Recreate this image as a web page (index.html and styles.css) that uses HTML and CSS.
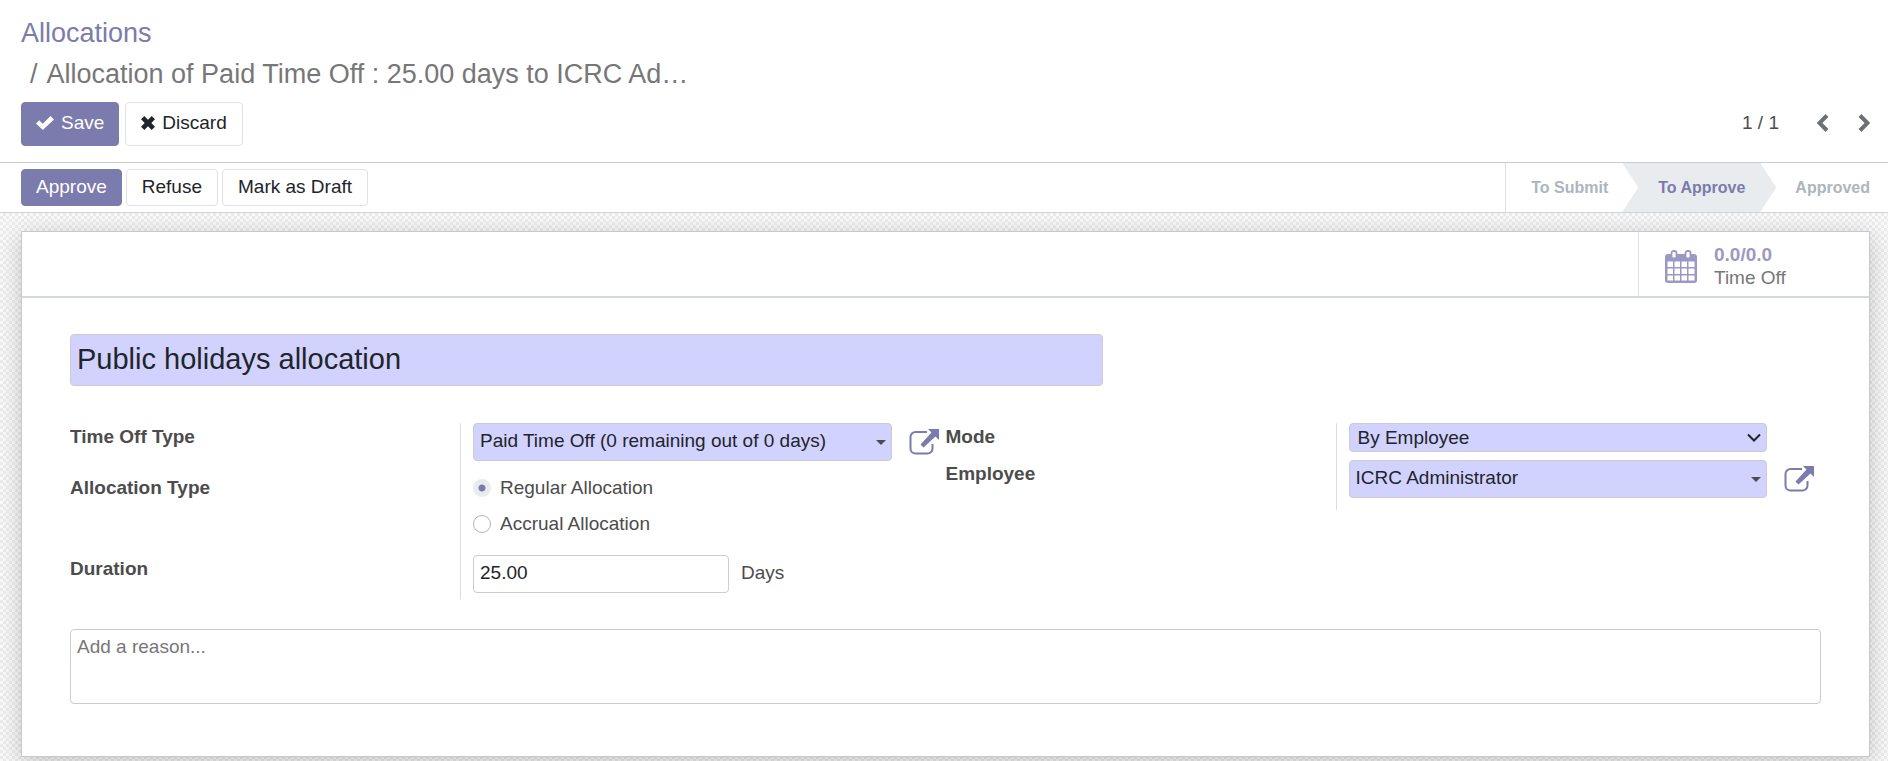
FILE: index.html
```html
<!DOCTYPE html>
<html lang="en">
<head>
<meta charset="utf-8">
<title>Allocation of Paid Time Off</title>
<link rel="stylesheet" href="styles.css">
</head>
<body>
<svg class="defs" aria-hidden="true">
  <symbol id="external" viewBox="0 0 30 26">
    <path d="M18 3H6.500a5 5 0 0 0-5 5V19.500a5 5 0 0 0 5 5H18.500a5 5 0 0 0 5-5V15" fill="none" stroke="currentColor" stroke-width="2"/>
    <path d="M19 0H30V11L26.500 7.500 14.500 18.500 11.500 15.500 22.500 3.500z" fill="currentColor"/>
  </symbol>
</svg>
<header class="control-panel">
  <nav class="breadcrumb" aria-label="Breadcrumb">
    <a class="crumb" href="#">Allocations</a>
    <span class="crumb crumb-active"><span class="slash">/</span>Allocation of Paid Time Off : 25.00 days to ICRC Ad…</span>
  </nav>
  <div class="actions">
    <div class="action-buttons">
      <button class="btn btn-primary btn-large" type="button"><svg class="check" viewBox="0 0 18 14"><path d="M0 7.500 3.200 4.300 6.800 7.700 14.500 0 18 3.400 6.800 14z" fill="currentColor"/></svg>Save</button>
      <button class="btn btn-large" type="button"><svg class="cross" viewBox="0 0 14 14"><path d="M3.300 0 7 3.700 10.700 0 14 3.300 10.300 7 14 10.700 10.700 14 7 10.300 3.300 14 0 10.700 3.700 7 0 3.300z" fill="currentColor"/></svg>Discard</button>
    </div>
    <div class="pager">
      <span>1 / 1</span>
      <button class="pager-btn" type="button" aria-label="Previous"><svg viewBox="0 0 12 18"><path d="M10 1.500 2.500 9 10 16.500" fill="none" stroke="currentColor" stroke-width="4"/></svg></button>
      <button class="pager-btn" type="button" aria-label="Next"><svg viewBox="0 0 12 18"><path d="M2 1.500 9.500 9 2 16.500" fill="none" stroke="currentColor" stroke-width="4"/></svg></button>
    </div>
  </div>
</header>
<div class="statusbar">
  <div class="status-buttons">
    <button class="btn btn-primary" type="button">Approve</button>
    <button class="btn" type="button">Refuse</button>
    <button class="btn" type="button">Mark as Draft</button>
  </div>
  <div class="stages">
    <span class="stage">To Submit</span>
    <span class="stage stage-current">To Approve</span>
    <span class="stage stage-last">Approved</span>
  </div>
</div>
<main class="canvas">
  <form class="sheet">
    <div class="button-box">
      <button class="stat" type="button">
        <svg class="calendar" viewBox="0 0 32 33">
          <path d="M3 4H29a3 3 0 0 1 3 3V30a3 3 0 0 1-3 3H3a3 3 0 0 1-3-3V7a3 3 0 0 1 3-3z" fill="#9b98c4"/>
          <path d="M2.500 11.500H8V17H2.500zM9.500 11.500H15V17H9.500zM16.500 11.500H22V17H16.500zM23.500 11.500H29.500V17H23.500zM2.500 18.500H8V24H2.500zM9.500 18.500H15V24H9.500zM16.500 18.500H22V24H16.500zM23.500 18.500H29.500V24H23.500zM2.500 25.500H8V30.500H2.500zM9.500 25.500H15V30.500H9.500zM16.500 25.500H22V30.500H16.500zM23.500 25.500H29.500V30.500H23.500z" fill="#fff"/>
          <rect x="6.500" y="1" width="5" height="7.500" rx="2" fill="#fff" stroke="#9b98c4" stroke-width="1.800"/>
          <rect x="20.500" y="1" width="5" height="7.500" rx="2" fill="#fff" stroke="#9b98c4" stroke-width="1.800"/>
        </svg>
        <span class="stat-text"><strong class="stat-value">0.0/0.0</strong><span>Time Off</span></span>
      </button>
    </div>
    <div class="sheet-body">
      <input class="field required title" type="text" value="Public holidays allocation" aria-label="Title">
      <div class="groups">
        <div class="group">
          <div class="row row-type">
            <label class="label" for="type">Time Off Type</label>
            <div class="value">
              <div class="combo"><input class="field required" id="type" type="text" value="Paid Time Off (0 remaining out of 0 days)"><span class="caret"></span></div>
              <a class="external" href="#" aria-label="Open time off type"><svg><use href="#external"/></svg></a>
            </div>
          </div>
          <div class="row row-alloc">
            <span class="label" id="alloc">Allocation Type</span>
            <div class="value radios" role="radiogroup" aria-labelledby="alloc">
              <label class="radio"><input type="radio" name="alloc" checked>Regular Allocation</label>
              <label class="radio"><input type="radio" name="alloc">Accrual Allocation</label>
            </div>
          </div>
          <div class="row row-duration">
            <label class="label" for="duration">Duration</label>
            <div class="value"><input class="field duration" id="duration" type="text" value="25.00"><span class="unit">Days</span></div>
          </div>
        </div>
        <div class="group">
          <div class="row row-mode">
            <label class="label" for="mode">Mode</label>
            <div class="value">
              <div class="combo">
                <select class="field required mode" id="mode"><option>By Employee</option></select>
                <svg class="chevron" viewBox="0 0 14 9"><path d="M1 1.500 7 7.500 13 1.500" fill="none" stroke="currentColor" stroke-width="2"/></svg>
              </div>
            </div>
          </div>
          <div class="row row-employee">
            <label class="label" for="employee">Employee</label>
            <div class="value">
              <div class="combo"><input class="field required" id="employee" type="text" value="ICRC Administrator"><span class="caret"></span></div>
              <a class="external" href="#" aria-label="Open employee"><svg><use href="#external"/></svg></a>
            </div>
          </div>
        </div>
      </div>
      <textarea class="field reason" placeholder="Add a reason..." aria-label="Reason"></textarea>
    </div>
  </form>
</main>
</body>
</html>
```
FILE: styles.css
```css
* { box-sizing: border-box; }
body {
  margin: 0;
  min-height: 100vh;
  display: flex;
  flex-direction: column;
  overflow: hidden;
  background: #fff;
  color: #4c4c4c;
  font-family: "Liberation Sans", Arial, sans-serif;
  font-size: 19px;
  line-height: 28px;
}
button, input, select, textarea { font: inherit; color: #212529; margin: 0; }
a { color: #7c7bad; text-decoration: none; }
.defs { display: none; }

.control-panel { padding: 13px 18px 16px 21px; border-bottom: 1px solid #c9ccd2; }
.breadcrumb { display: flex; flex-direction: column; font-size: 27px; line-height: 41px; }
.crumb-active { color: #777; padding-left: 9px; }
.slash { padding-right: 9px; }
.actions { display: flex; justify-content: space-between; align-items: center; margin-top: 7px; }
.action-buttons { display: flex; gap: 6px; }
.btn {
  display: flex;
  align-items: center;
  height: 37px;
  padding: 0 15px 2px;
  border: 1px solid #dee2e6;
  border-radius: 4px;
  background: #fff;
}
.btn-primary { background: #7c7bad; border-color: #7c7bad; color: #fff; padding: 0 14px 2px; }
.btn-large { height: 44px; gap: 7px; }
.check { width: 18px; height: 14px; }
.cross { width: 14px; height: 14px; }
.pager { display: flex; align-items: center; padding-bottom: 2px; }
.pager-btn { display: flex; padding: 0; border: 0; background: none; color: #6c6f73; margin-left: 29px; }
.pager span { margin-right: 9px; }
.pager-btn svg { width: 12px; height: 18px; }

.statusbar { display: flex; justify-content: space-between; height: 50px; border-bottom: 1px solid #ced4da; padding-left: 21px; }
.status-buttons { display: flex; align-items: center; gap: 4px; }
.stages { display: flex; border-left: 1px solid #dee2e6; font-size: 16px; font-weight: bold; color: #adb5bd; }
.stage { display: flex; align-items: center; padding: 0 14px 0 25px; }
.stage-current {
  color: #7c7bad;
  background: #e9ecef;
  padding: 0 31px 0 36px;
  clip-path: polygon(0 0, calc(100% - 16px) 0, 100% 50%, calc(100% - 16px) 100%, 0 100%, 16px 50%);
}
.stage-last { padding: 0 18px 0 19px; }

.canvas {
  flex: 1;
  padding: 18px 18px 4px 21px;
  background: repeating-conic-gradient(#ebebeb 0 25%, #fafafa 0 50%) 0 0 / 6px 6px;
}
.sheet { background: #fff; border: 1px solid #c8c8d3; box-shadow: 0 5px 22px rgba(0, 0, 0, 0.2); }
.button-box { display: flex; justify-content: flex-end; border-bottom: 2px solid #d4d9de; }
.stat {
  display: flex;
  align-items: center;
  gap: 17px;
  width: 231px;
  height: 64px;
  padding: 4px 26px 0;
  border: 0;
  border-left: 1px solid #dee2e6;
  background: #fff;
  color: #777;
  text-align: left;
}
.calendar { width: 32px; height: 33px; }
.stat-text { display: flex; flex-direction: column; line-height: 23px; }
.stat-value { color: #9b98c4; }

.sheet-body { padding: 36px 48px 52px; }
.field {
  display: block;
  width: 100%;
  height: 38px;
  padding: 0 6px 2px;
  border: 1px solid #ccc;
  border-radius: 4px;
  background: #fff;
}
.required { background: #d2d2ff; }
.title { width: 59%; height: 52px; font-size: 29px; }
.groups { display: grid; grid-template-columns: 1fr 1fr; align-items: start; margin: 37px 0 30px; }
.row { display: grid; grid-template-columns: 390px 1fr; }
.label { font-weight: bold; }
.value { display: flex; align-items: flex-start; padding: 0 7px 0 12px; border-left: 1px solid #ddd; }
.combo { position: relative; flex: 1; }
.caret {
  position: absolute;
  right: 6px;
  top: 17px;
  border: 5px solid transparent;
  border-top-color: #4c4c4c;
  border-bottom: 0;
}
.external { margin: 6px 0 0 17px; }
.external svg { display: block; width: 30px; height: 26px; }
.row-type { height: 51px; }
.row-alloc { height: 81px; }
.row-duration { height: 44px; }
.row-mode { height: 37px; }
.row-mode .value { padding-right: 54px; }
.row-employee { height: 50px; }
.radios { flex-direction: column; gap: 8px; }
.radio { display: flex; align-items: center; gap: 9px; }
.radio input {
  appearance: none;
  width: 18px;
  height: 18px;
  border: 1px solid #adb5bd;
  border-radius: 50%;
}
.radio input:checked { border-color: #e9ecef; background: radial-gradient(circle, #7c7bad 0 3px, #e9ecef 4px); }
.duration { width: 256px; }
.unit { margin-left: 12px; line-height: 36px; }
.mode { appearance: none; height: 29px; padding: 0 8px; line-height: 27px; }
.chevron { position: absolute; right: 6px; top: 10px; width: 14px; height: 9px; color: #212529; }
.reason { height: 75px; padding: 3px 6px; resize: none; }
.reason::placeholder { color: #777; }
```
